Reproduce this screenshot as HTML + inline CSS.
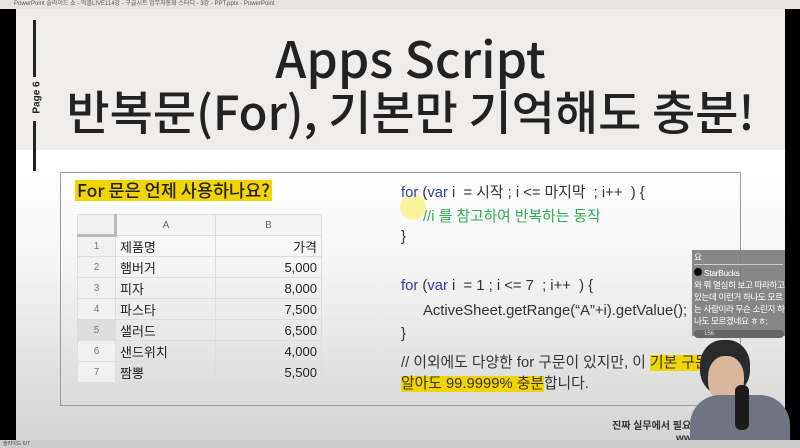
<!DOCTYPE html>
<html><head><meta charset="utf-8"><style>
*{margin:0;padding:0;box-sizing:border-box}
body{width:800px;height:448px;overflow:hidden;background:#000;font-family:"Liberation Sans","Noto Sans CJK KR",sans-serif;position:relative}
.abs{position:absolute}
#tb{left:0;top:0;width:800px;height:9px;background:#e6e4e2;font-size:6px;color:#555;line-height:9px;padding-left:14px;white-space:nowrap}
#slide{left:16px;top:9px;width:769px;height:431px;background:linear-gradient(#fff 0,#fff 150px,#f6f6f6 250px,#d4d4d4 431px)}
#hdr{left:0;top:0;width:769px;height:141px;background:#eeedeb}
.t{font-family:"Noto Sans CJK KR",sans-serif;font-weight:500;color:#222;white-space:nowrap}
#status{left:0;top:440px;width:800px;height:8px;background:#ccc;font-size:5px;color:#444;padding-left:3px;line-height:8px}
table{border-collapse:collapse;font-size:13px;color:#222}
td{height:21px;border:1px solid #ddd;padding:0 4px}
td.n{width:38px;background:#f1f1f1;color:#777;text-align:center;font-size:10px}
td.a{width:100px}
td.b{width:106px;text-align:right}
.code{font-size:14.8px;color:#333;white-space:nowrap}
.kw{color:#2e3fa8}
.hl{background:#f2d400}
</style></head><body>
<div id="tb" class="abs">PowerPoint 슬라이드 쇼 - 먹볼LIVE114강 - 구글시트 업무자동화 스터디 - 3강 - PPT.pptx - PowerPoint</div>
<div id="slide" class="abs">
 <div id="hdr" class="abs"></div>
 <div class="abs" style="left:17px;top:11px;width:3px;height:57px;background:#222"></div>
 <div class="abs" style="left:17px;top:112px;width:3px;height:50px;background:#222"></div>
 <div class="abs" style="left:5px;top:83px;font-size:10px;font-weight:bold;transform:rotate(-90deg);color:#222;white-space:nowrap">Page 6</div>
 <div class="abs t" style="left:0;width:769px;text-align:center;top:18px;font-size:50px;line-height:60px;padding-left:20px">Apps Script</div>
 <div class="abs t" style="left:0;width:769px;text-align:center;top:72px;font-size:47px;line-height:58px;padding-left:20px">반복문(For), 기본만 기억해도 충분!</div>
 <div class="abs" style="left:44px;top:163px;width:681px;height:234px;border:1px solid #999"></div>
 <div class="abs hl t" style="left:59px;top:171px;font-size:17.5px;line-height:21px;padding:0 2px">For 문은 언제 사용하나요?</div>
 <table class="abs" style="left:61px;top:205px">
  <tr><td class="n" style="border-right:3px solid #bbb;border-bottom:3px solid #bbb"></td><td class="a" style="text-align:center;color:#666;font-size:10px;background:#f4f4f4">A</td><td class="b" style="text-align:center;color:#666;font-size:10px;background:#f4f4f4">B</td></tr>
  <tr><td class="n">1</td><td class="a">제품명</td><td class="b">가격</td></tr>
  <tr><td class="n">2</td><td class="a">햄버거</td><td class="b">5,000</td></tr>
  <tr><td class="n">3</td><td class="a">피자</td><td class="b">8,000</td></tr>
  <tr><td class="n">4</td><td class="a">파스타</td><td class="b">7,500</td></tr>
  <tr><td class="n" style="background:#ddd">5</td><td class="a">샐러드</td><td class="b">6,500</td></tr>
  <tr><td class="n">6</td><td class="a">샌드위치</td><td class="b">4,000</td></tr>
  <tr><td class="n">7</td><td class="a">짬뽕</td><td class="b">5,500</td></tr>
 </table>
 <div class="abs" style="left:384px;top:185px;width:26px;height:26px;border-radius:50%;background:rgba(250,240,100,.6)"></div>
 <div class="abs code" style="left:385px;top:172px"><span class="kw">for</span> (<span class="kw">var</span> i &nbsp;= 시작 ; i &lt;= 마지막 &nbsp;; i++ &nbsp;) {</div>
 <div class="abs code" style="left:407px;top:196px;color:#2eaa55">//i 를 참고하여 반복하는 동작</div>
 <div class="abs code" style="left:385px;top:220px">}</div>
 <div class="abs code" style="left:385px;top:269px"><span class="kw">for</span> (<span class="kw">var</span> i &nbsp;= 1 ; i &lt;= 7 &nbsp;; i++ &nbsp;) {</div>
 <div class="abs code" style="left:407px;top:294px">ActiveSheet.getRange(“A”+i).getValue();</div>
 <div class="abs code" style="left:385px;top:317px">}</div>
 <div class="abs code" style="left:385px;top:342px">// 이외에도 다양한 for 구문이 있지만, 이 <span class="hl">기본 구문만</span></div>
 <div class="abs code" style="left:385px;top:363px"><span class="hl">알아도 99.9999% 충분</span>합니다.</div>
 <div class="abs" style="left:596px;top:408px;font-size:10px;font-weight:bold;color:#333">진짜 실무에서 필요</div>
 <div class="abs" style="left:660px;top:424px;font-size:10px;font-weight:bold;color:#333">www</div>
</div>
<div class="abs" style="left:692px;top:250px;width:93px;height:86px;background:rgba(120,120,120,.88);color:#fff;font-size:8.6px;line-height:12px;padding:1px 2px;overflow:hidden;white-space:nowrap">요<div style="border-top:1px solid #ccc;margin-top:1px;padding-top:2px;letter-spacing:-0.4px"><span style="display:inline-block;width:8px;height:8px;border-radius:50%;background:#000"></span> StarBucks<br>와 뭐 열심히 보고 따라하고<br>있는데 이런거 하나도 모르<br>는 사람이라 무슨 소린지 하<br>나도 모르겠네요 ㅎㅎ;</div></div>
<div class="abs" style="left:694px;top:330px;width:90px;height:8px;background:#666;border-radius:4px;font-size:6px;color:#ddd;padding-left:10px;line-height:8px">156</div>
<div class="abs" style="left:700px;top:340px;width:50px;height:55px;border-radius:45%;background:#2a2a2a"></div>
<div class="abs" style="left:708px;top:356px;width:36px;height:46px;border-radius:45%;background:#d9b79d"></div>
<div class="abs" style="left:690px;top:395px;width:100px;height:45px;border-radius:30px 30px 0 0;background:#6f7580"></div>
<div class="abs" style="left:735px;top:385px;width:14px;height:45px;border-radius:6px;background:#1c1c1c"></div>
<div id="status" class="abs">슬라이드 6/7</div>
</body></html>
